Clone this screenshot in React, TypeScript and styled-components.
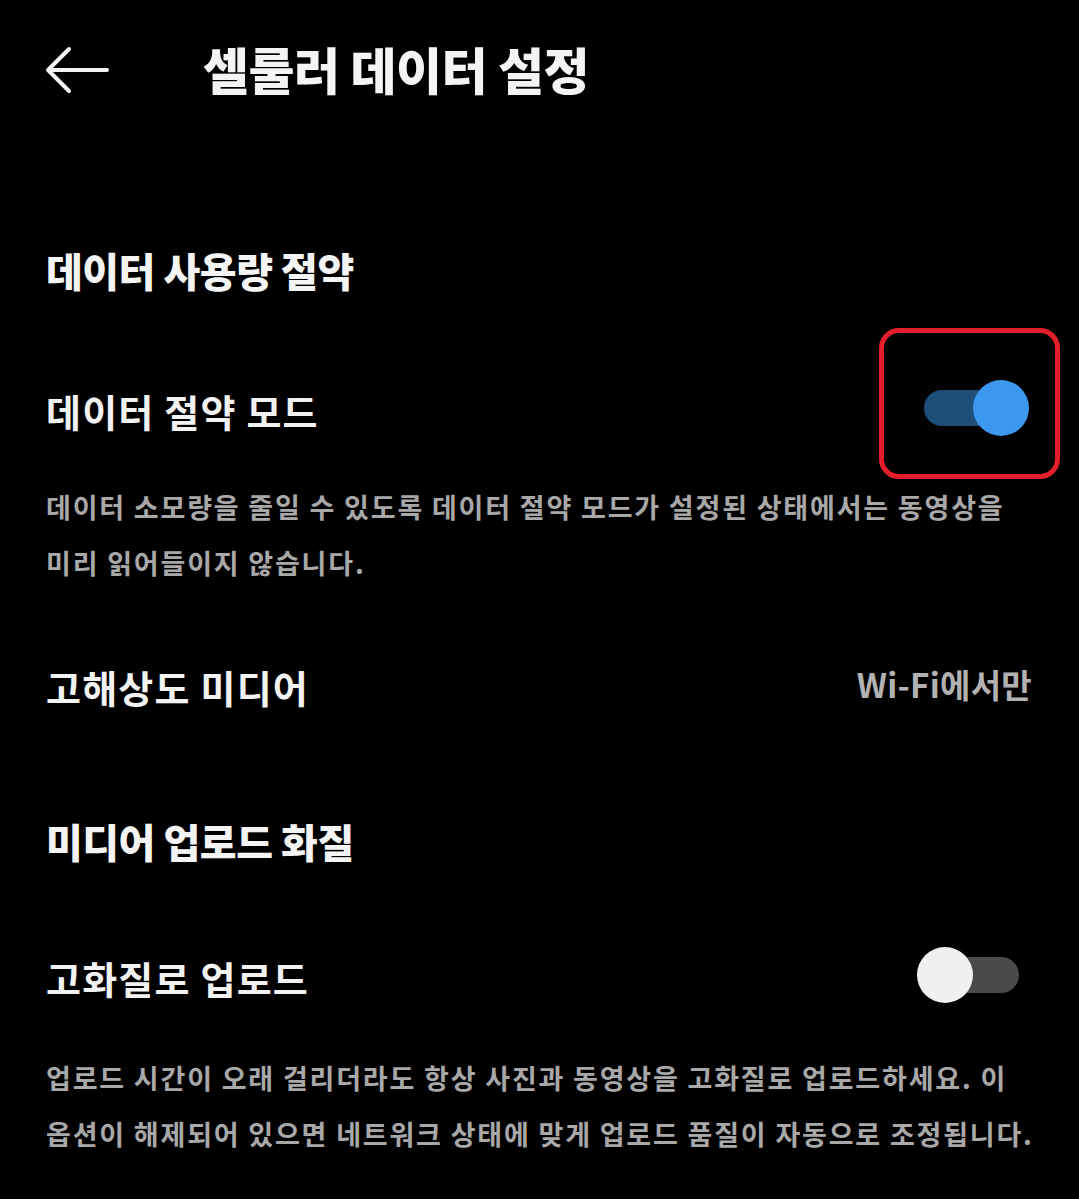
import styled, { createGlobalStyle } from "styled-components";

const GlobalStyle = createGlobalStyle`
  html, body {
    margin: 0;
    padding: 0;
    background: #000;
  }
  body {
    font-family: "Noto Sans CJK KR", "Noto Sans", sans-serif;
    color: #f2f2f2;
  }
`;

const Screen = styled.div`
  width: 1079px;
  min-height: 1199px;
  background: #000;
  overflow: hidden;
`;

const Header = styled.header`
  display: flex;
  align-items: center;
  height: 136px;
`;

const BackButton = styled.button`
  display: flex;
  align-items: center;
  width: 203px;
  height: 100%;
  padding: 4px 0 0 45px;
  margin: 0;
  border: none;
  background: none;
  cursor: pointer;
`;

const Title = styled.h1`
  margin: 0;
  font-size: 50px;
  font-weight: 900;
  letter-spacing: -0.5px;
  line-height: 1;
  color: #f4f4f4;
`;

const Content = styled.main`
  display: flex;
  flex-direction: column;
  padding: 0 47px 0 46px;
`;

const SectionTitle = styled.h2<{ $top: number }>`
  margin: ${(p) => p.$top}px 0 0;
  font-size: 40px;
  font-weight: 900;
  line-height: 60px;
  letter-spacing: -0.5px;
  color: #f4f4f4;
`;

const Row = styled.div<{ $top: number }>`
  display: flex;
  align-items: center;
  justify-content: space-between;
  height: 96px;
  margin-top: ${(p) => p.$top}px;
`;

const Label = styled.span`
  padding-top: 4px;
  font-size: 38px;
  font-weight: 600;
  letter-spacing: 1.2px;
  color: #f2f2f2;
`;

const Value = styled.span`
  font-size: 33px;
  font-weight: 600;
  letter-spacing: 0.3px;
  color: #b2b2b2;
`;

const Description = styled.p<{ $top: number }>`
  margin: ${(p) => p.$top}px -24px 0 0;
  font-size: 27px;
  font-weight: 600;
  line-height: 56px;
  letter-spacing: 1.8px;
  color: #a8a8a8;
  word-break: keep-all;
`;

const ToggleWrap = styled.div`
  position: relative;
  margin-right: 3px;
`;

const Toggle = styled.div`
  position: relative;
  width: 112px;
  height: 56px;
`;

const Track = styled.div<{ $on: boolean }>`
  position: absolute;
  top: 10px;
  left: 7px;
  right: 10px;
  height: 36px;
  border-radius: 18px;
  background: ${(p) => (p.$on ? "#1e4f7b" : "#4a4a4a")};
`;

const Thumb = styled.div<{ $on: boolean }>`
  position: absolute;
  top: 0;
  left: ${(p) => (p.$on ? "56px" : "0")};
  width: 56px;
  height: 56px;
  border-radius: 50%;
  background: ${(p) => (p.$on ? "#3c97ee" : "#f0f0f0")};
`;

const Highlight = styled.div`
  position: absolute;
  left: -38px;
  right: -31px;
  top: -52px;
  bottom: -43px;
  border: 5px solid #e41f2b;
  border-radius: 20px;
  pointer-events: none;
`;

const BackArrow = () => (
  <svg width="64" height="48" viewBox="0 0 64 48" fill="none">
    <path
      d="M4 24H62M24 3L3 24L24 45"
      stroke="#f4f4f4"
      strokeWidth="4"
      strokeLinecap="round"
      strokeLinejoin="round"
    />
  </svg>
);

const Switch = ({ on, highlighted }: { on: boolean; highlighted?: boolean }) => (
  <ToggleWrap>
    <Toggle role="switch" aria-checked={on}>
      <Track $on={on} />
      <Thumb $on={on} />
    </Toggle>
    {highlighted && <Highlight />}
  </ToggleWrap>
);

export default function App() {
  return (
    <Screen>
      <GlobalStyle />
      <Header>
        <BackButton aria-label="뒤로">
          <BackArrow />
        </BackButton>
        <Title>셀룰러 데이터 설정</Title>
      </Header>
      <Content>
        <SectionTitle $top={104}>데이터 사용량 절약</SectionTitle>
        <Row $top={60}>
          <Label>데이터 절약 모드</Label>
          <Switch on highlighted />
        </Row>
        <Description $top={23}>
          데이터 소모량을 줄일 수 있도록 데이터 절약 모드가 설정된 상태에서는 동영상을 미리 읽어들이지 않습니다.
        </Description>
        <Row $top={45}>
          <Label>고해상도 미디어</Label>
          <Value>Wi-Fi에서만</Value>
        </Row>
        <SectionTitle $top={79}>미디어 업로드 화질</SectionTitle>
        <Row $top={56}>
          <Label>고화질로 업로드</Label>
          <Switch on={false} />
        </Row>
        <Description $top={27}>
          업로드 시간이 오래 걸리더라도 항상 사진과 동영상을 고화질로 업로드하세요. 이 옵션이 해제되어 있으면 네트워크 상태에 맞게 업로드 품질이 자동으로 조정됩니다.
        </Description>
      </Content>
    </Screen>
  );
}
